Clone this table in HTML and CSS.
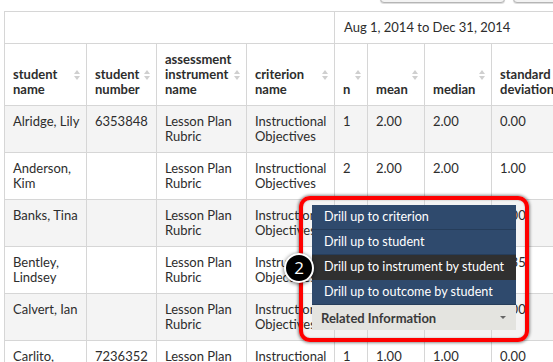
FILE: index.html
```html
<!DOCTYPE html>
<html lang="en-US">
    <head>
        <meta charset="utf-8">
        <title>Outcome Results by Student</title>
        <link rel="stylesheet" href="styles.css">
    </head>
    <body>
        <div class="toolbar">
            <span class="tool-btn"></span>
            <span class="tool-btn"></span>
        </div>

        <div class="report">
            <table class="grid">
                <colgroup>
                    <col class="c-name"><col class="c-num"><col class="c-inst"><col class="c-crit">
                    <col class="c-n"><col class="c-mean"><col class="c-median"><col class="c-sd">
                </colgroup>
                <thead>
                    <tr class="period">
                        <th colspan="4"></th>
                        <th colspan="4" class="range">Aug 1, 2014 to Dec 31, 2014</th>
                    </tr>
                    <tr class="labels">
                        <th>student name<i class="sort"></i></th>
                        <th>student number<i class="sort"></i></th>
                        <th>assessment instrument name<i class="sort"></i></th>
                        <th>criterion name<i class="sort"></i></th>
                        <th>n<i class="sort"></i></th>
                        <th>mean<i class="sort"></i></th>
                        <th>median<i class="sort"></i></th>
                        <th>standard deviation<i class="sort"></i></th>
                    </tr>
                </thead>
                <tbody>
                    <tr>
                        <td>Alridge, Lily</td><td>6353848</td><td>Lesson Plan Rubric</td><td>Instructional Objectives</td>
                        <td>1</td><td>2.00</td><td>2.00</td><td>0.00</td>
                    </tr>
                    <tr>
                        <td>Anderson, Kim</td><td></td><td>Lesson Plan Rubric</td><td>Instructional Objectives</td>
                        <td>2</td><td>2.00</td><td>2.00</td><td>1.00</td>
                    </tr>
                    <tr>
                        <td>Banks, Tina</td><td></td><td>Lesson Plan Rubric</td><td>Instructional Objectives</td>
                        <td>1</td><td>3.00</td><td>3.00</td><td>0.00</td>
                    </tr>
                    <tr>
                        <td>Bentley, Lindsey</td><td></td><td>Lesson Plan Rubric</td><td>Instructional Objectives</td>
                        <td>2</td><td>2.50</td><td>2.50</td><td>0.35</td>
                    </tr>
                    <tr>
                        <td>Calvert, Ian</td><td></td><td>Lesson Plan Rubric</td><td>Instructional Objectives</td>
                        <td>1</td><td>2.00</td><td>2.00</td><td>0.00</td>
                    </tr>
                    <tr>
                        <td>Carlito, Maria</td><td>7236352</td><td>Lesson Plan Rubric</td><td>Instructional Objectives</td>
                        <td>1</td><td>1.00</td><td>1.00</td><td>0.00</td>
                    </tr>
                </tbody>
            </table>

            <!-- drill menu popped over the table rows -->
            <div class="callout">
                <span class="badge">2</span>
                <ul class="drill-menu">
                    <li>Drill up to criterion</li>
                    <li>Drill up to student</li>
                    <li class="active">Drill up to instrument by student</li>
                    <li>Drill up to outcome by student</li>
                </ul>
                <div class="related">
                    <span>Related Information</span>
                    <i class="caret"></i>
                </div>
            </div>
        </div>
    </body>
</html>
```

FILE: styles.css
```css
html, body {
    margin: 0;
    overflow: hidden;
}

body {
    background-color: #fff;
    font-family: Lato, "Open Sans", sans-serif;
    font-size: 13px;
    color: #2d2d2d;
}

/* only the bottom edge of the toolbar buttons is on screen */
.toolbar {
    height: 4px;
    overflow: hidden;
    display: flex;
    align-items: flex-end;
    gap: 8px;
    padding-left: 380px;
}

.tool-btn {
    flex: none;
    width: 123px;
    height: 24px;
    margin-bottom: 1px;
    border: 1px solid #b5b5b5;
    border-radius: 4px;
    background: #f3f3f3;
    box-shadow: 0 1px 1px rgba(0, 0, 0, .15);
}

.report {
    position: relative;
    padding: 7px 0 0 4px;
}

.grid {
    border-collapse: collapse;
    table-layout: fixed;
    width: 567px;
}

.c-name { width: 82px; }
.c-num { width: 70px; }
.c-inst { width: 90px; }
.c-crit { width: 88px; }
.c-n { width: 33px; }
.c-mean { width: 57px; }
.c-median { width: 67px; }
.c-sd { width: 80px; }

.grid th,
.grid td {
    border: 1px solid #d6d6d6;
    line-height: 15px;
    text-align: left;
}

.grid th {
    position: relative;
    font-weight: bold;
    vertical-align: bottom;
    padding: 8px 18px 8px 8px;
}

.period th {
    height: 14px;
}

.period th.range {
    font-weight: normal;
    vertical-align: middle;
    padding: 8px 9px;
}

.grid td {
    vertical-align: top;
    padding: 8px 3px 8px 8px;
    height: 30px;
}

.grid tbody tr:nth-child(odd) td {
    background-color: #f4f4f4;
}

/* up/down sort arrows */
.sort {
    position: absolute;
    right: 6px;
    top: 50%;
    margin-top: -5px;
    width: 6px;
    height: 10px;
}

.sort::before,
.sort::after {
    content: "";
    position: absolute;
    left: 0;
    border-left: 3px solid transparent;
    border-right: 3px solid transparent;
}

.sort::before {
    top: 0;
    border-bottom: 4px solid #cfcfcf;
}

.sort::after {
    bottom: 0;
    border-top: 4px solid #cfcfcf;
}

.callout {
    position: absolute;
    left: 299px;
    top: 192px;
    width: 204px;
    padding: 5px 9px 8px 9px;
    border: 4px solid #f00;
    border-radius: 11px;
    box-shadow: 0 0 3px 1px rgba(0, 0, 0, .45), inset 0 0 2px rgba(0, 0, 0, .3);
}

.badge {
    position: absolute;
    left: -19px;
    top: 53px;
    width: 26px;
    height: 26px;
    border: 2px solid #fff;
    border-radius: 50%;
    background: #000;
    color: #fff;
    font-family: "Open Sans", Lato, sans-serif;
    font-size: 17px;
    line-height: 26px;
    text-align: center;
    box-shadow: 0 1px 4px rgba(0, 0, 0, .6);
    z-index: 2;
}

.drill-menu {
    list-style: none;
    margin: 0;
    padding: 0;
    background-color: #2f4a6d;
}

.drill-menu li {
    height: 24px;
    line-height: 24px;
    padding-left: 12px;
    color: #fff;
    font-size: 12.6px;
    border-bottom: 1px solid #263d5a;
}

.drill-menu li.active {
    background-color: #303030;
    border-bottom-color: #303030;
}

.related {
    display: flex;
    align-items: center;
    justify-content: space-between;
    height: 25px;
    padding: 0 10px 0 9px;
    background-color: #e4e4e0;
    color: #3a3a3a;
    font-weight: bold;
    font-size: 13px;
}

.caret {
    width: 0;
    height: 0;
    border-left: 3px solid transparent;
    border-right: 3px solid transparent;
    border-top: 3px solid #666;
}
```
